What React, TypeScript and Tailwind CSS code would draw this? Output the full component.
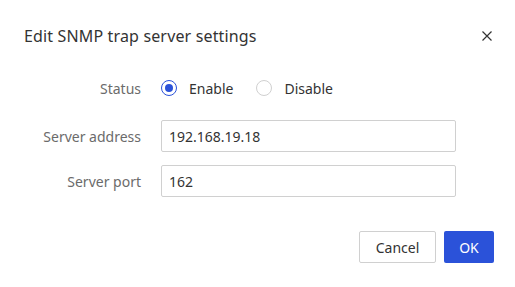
import React, { useState } from 'react';

const font = { fontFamily: '"Noto Sans", "Open Sans", sans-serif' };

export default function App() {
  const [status, setStatus] = useState<'enable' | 'disable'>('enable');

  return (
    <div className="w-[515px] h-[287px] bg-white text-[#333]" style={font}>
      <div className="flex items-center justify-between pl-6 pr-[22px] pt-[25px] h-[47px]">
        <h2 className="text-[16px] leading-[22px] tracking-[0.15px] text-[#333]">Edit SNMP trap server settings</h2>
        <button className="w-[12px] h-[12px] flex items-center justify-center text-[#333]">
          <svg width="10" height="10" viewBox="0 0 10 10" fill="none" stroke="currentColor" strokeWidth="1.2">
            <path d="M0.5 0.5L9.5 9.5M9.5 0.5L0.5 9.5" />
          </svg>
        </button>
      </div>

      <div className="mt-[25px] flex flex-col">
        <div className="flex items-center h-[32px]">
          <label className="w-[142px] pr-[1px] text-right text-[14px] text-[#6b6b6b]">Status</label>
          <div className="flex items-center ml-[19px] gap-[15px] text-[14px]">
            <RadioOption label="Enable" checked={status === 'enable'} onClick={() => setStatus('enable')} />
            <RadioOption label="Disable" checked={status === 'disable'} onClick={() => setStatus('disable')} />
          </div>
        </div>

        <FormRow label="Server address" value="192.168.19.18" className="mt-[16px]" />
        <FormRow label="Server port" value="162" className="mt-[13px]" />
      </div>

      <div className="flex justify-end gap-[8px] pr-[21px] mt-[34px]">
        <button className="h-[32px] w-[77px] border border-[#d0d0d0] rounded-[2px] text-[14px] text-[#333] bg-white">
          Cancel
        </button>
        <button className="h-[32px] w-[50px] rounded-[2px] text-[14px] text-white bg-[#2b52d9]">
          OK
        </button>
      </div>
    </div>
  );
}

interface RadioOptionProps {
  label: string;
  checked: boolean;
  onClick: () => void;
}

const RadioOption: React.FC<RadioOptionProps> = ({ label, checked, onClick }) => (
  <button onClick={onClick} className="flex items-center gap-[12px] pr-[8px]">
    <span
      className={`w-[16px] h-[16px] rounded-full border flex items-center justify-center ${
        checked ? 'border-[#2b52d9]' : 'border-[#d0d0d0]'
      }`}
    >
      {checked && <span className="w-[8px] h-[8px] rounded-full bg-[#2b52d9]" />}
    </span>
    <span className="text-[#333]">{label}</span>
  </button>
);

interface FormRowProps {
  label: string;
  value: string;
  className?: string;
}

const FormRow: React.FC<FormRowProps> = ({ label, value, className }) => (
  <div className={`flex items-center h-[32px] ${className ?? ''}`}>
    <label className="w-[142px] pr-[1px] text-right text-[14px] text-[#6b6b6b]">{label}</label>
    <input
      defaultValue={value}
      className="ml-[19px] w-[295px] h-[32px] border border-[#d0d0d0] rounded-[2px] px-[7px] text-[14px] text-[#333] outline-none"
      style={font}
    />
  </div>
);
